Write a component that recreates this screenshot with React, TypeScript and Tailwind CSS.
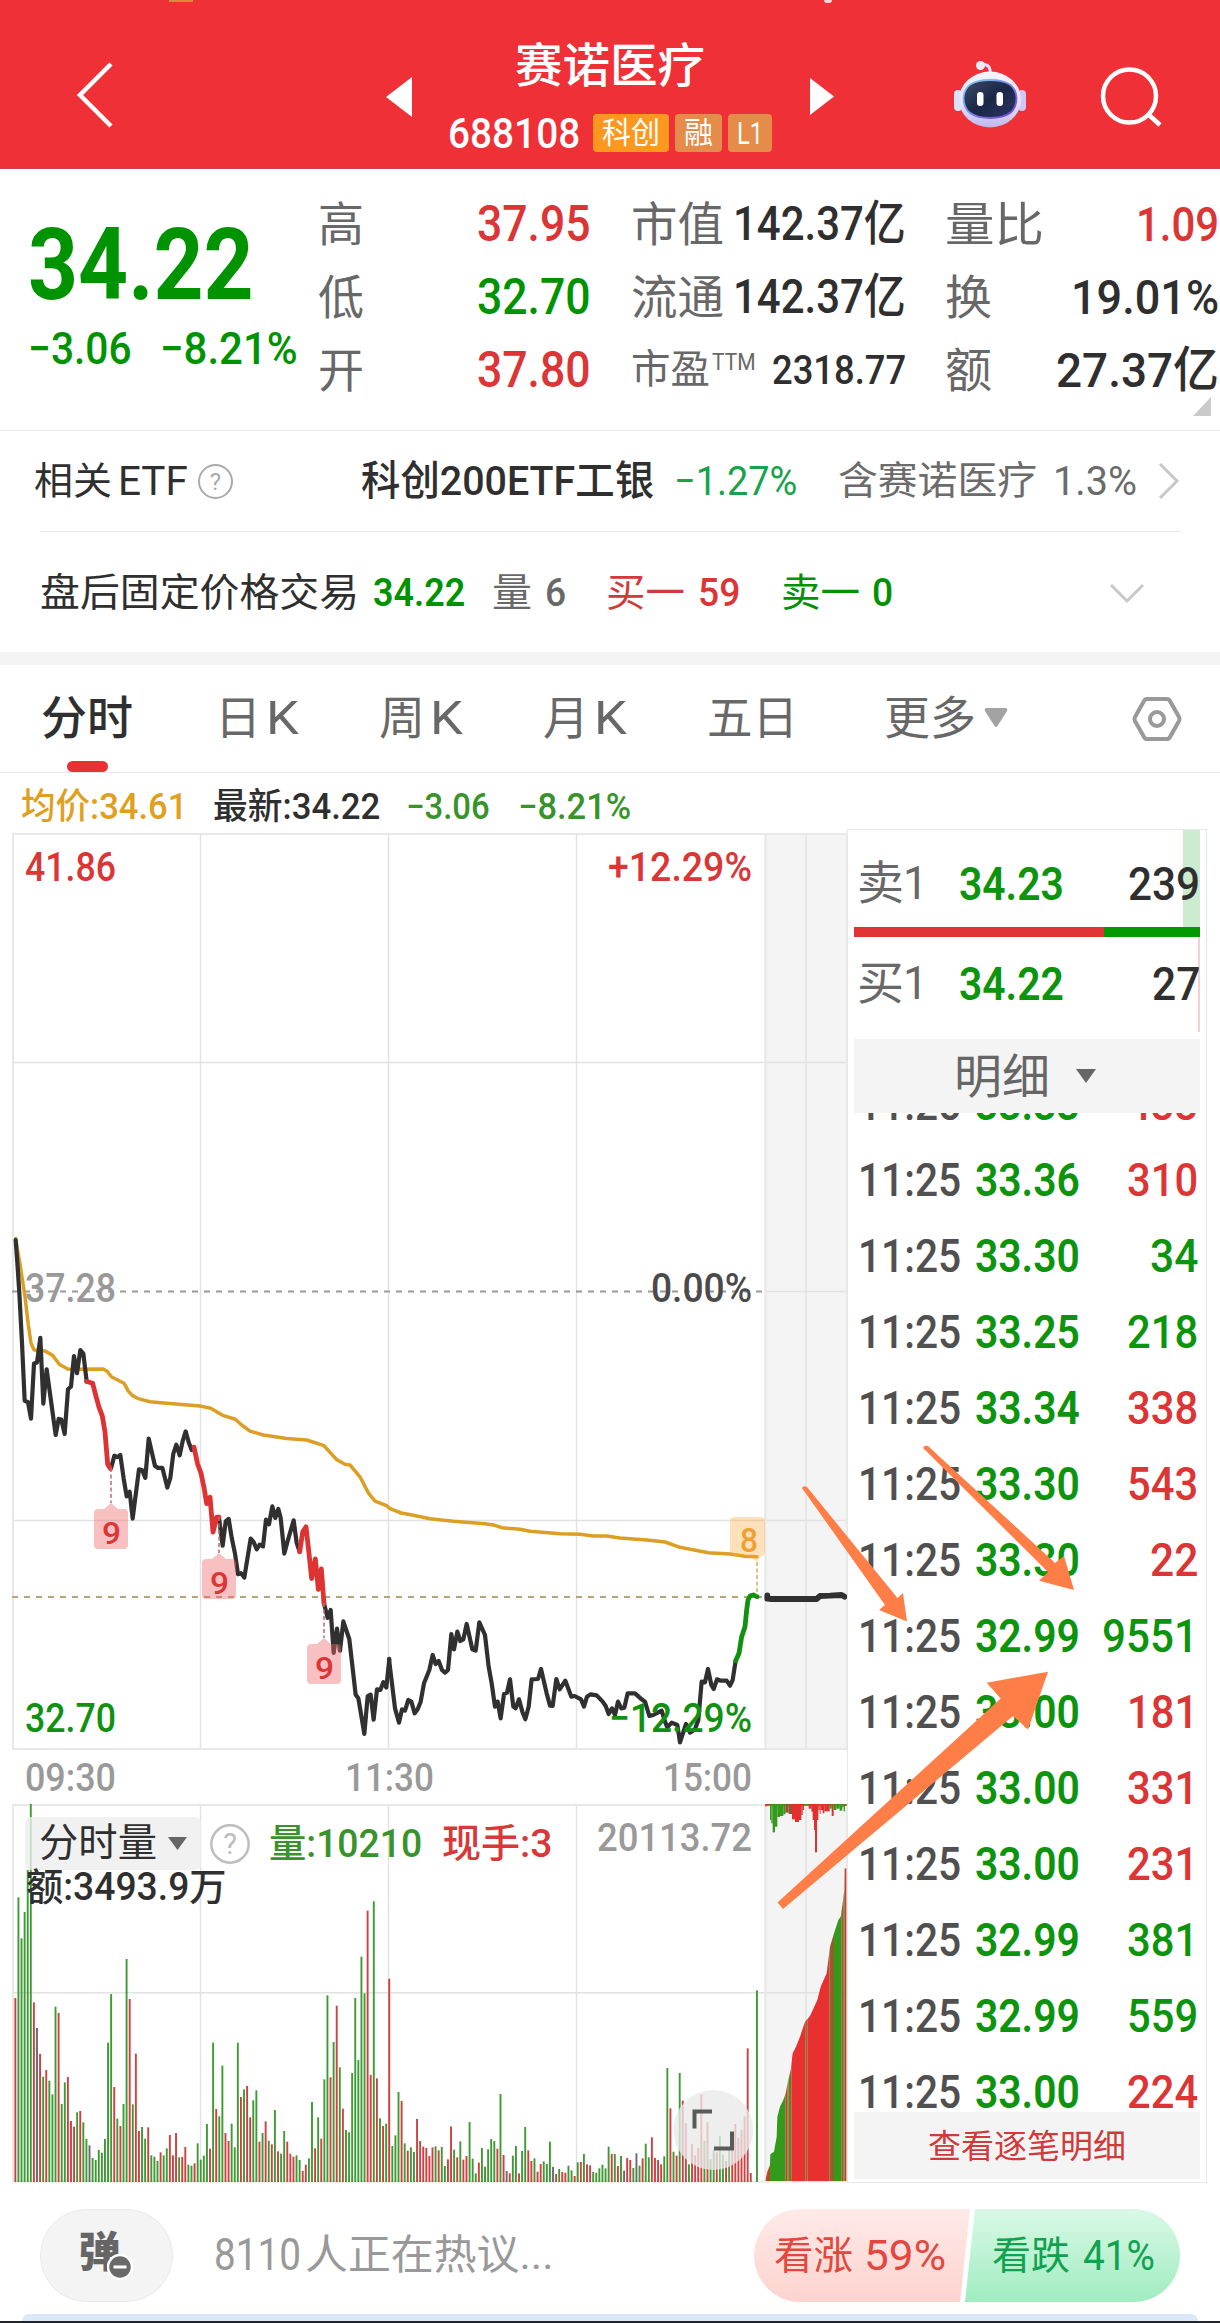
import { ReactNode, useLayoutEffect, useRef } from "react";
import clsx from "clsx";

interface FitProps {
  w: number;
  className?: string;
  children: ReactNode;
}

// Condenses a line of text horizontally until it fills the given width
function Fit({ w, className, children }: FitProps) {
  const ref = useRef<HTMLSpanElement>(null);

  useLayoutEffect(() => {
    const el = ref.current;
    if (!el) return;
    el.style.transform = `scaleX(${w / el.offsetWidth})`;
  }, [w, children]);

  return (
    <span className={clsx("block shrink-0 whitespace-nowrap leading-none", className)} style={{ width: w }}>
      <span ref={ref} className="inline-block origin-left align-top">{children}</span>
    </span>
  );
}

interface ChartTextProps {
  x: number;
  y: number;
  w: number;
  fill: string;
  size?: number;
  children: ReactNode;
}

function ChartText({ x, y, w, fill, size = 40, children }: ChartTextProps) {
  return (
    <text x={x} y={y} textLength={w} lengthAdjust="spacingAndGlyphs" fontSize={size} fontWeight={500} fill={fill}>
      {children}
    </text>
  );
}

function Robot() {
  return (
    <svg width="74" height="70" viewBox="0 0 74 70">
      <defs>
        <linearGradient id="shell" x1="0" y1="0" x2="0" y2="1">
          <stop offset="0" stopColor="#f7f4ff" />
          <stop offset="0.6" stopColor="#e3defa" />
          <stop offset="1" stopColor="#bdb9ee" />
        </linearGradient>
        <linearGradient id="visor" x1="0" y1="0" x2="1" y2="1">
          <stop offset="0" stopColor="#3f4a68" />
          <stop offset="0.5" stopColor="#1b2747" />
          <stop offset="1" stopColor="#2a3560" />
        </linearGradient>
        <linearGradient id="rim" x1="0" y1="0" x2="1" y2="1">
          <stop offset="0" stopColor="#7fd8f2" />
          <stop offset="1" stopColor="#7a35e0" />
        </linearGradient>
      </defs>
      <path d="M27 5 C36 3 38 8 37 16" fill="none" stroke="#e3defa" strokeWidth="3" />
      <circle cx="27.500" cy="5.500" r="4.500" fill="#efe9fb" />
      <rect x="1" y="30" width="8" height="21" rx="4" fill="#d9e4fb" />
      <rect x="65" y="30" width="8" height="21" rx="4" fill="#cfc8f5" />
      <ellipse cx="37" cy="39.500" rx="31" ry="28" fill="url(#shell)" />
      <path d="M37 20 C54 20 63 25 63.500 38 C63.500 52 54 58 37 58 C20 58 10.500 52 10.500 38 C11 25 20 20 37 20Z" fill="url(#visor)" stroke="url(#rim)" strokeWidth="1.800" />
      <rect x="24" y="32" width="6.500" height="14" rx="3.200" fill="#fff" />
      <rect x="43.500" y="32" width="6.500" height="14" rx="3.200" fill="#fff" />
    </svg>
  );
}

function Header() {
  return (
    <header className="relative flex h-[169px] shrink-0 border-b border-[#c8404c] bg-[#f03037] text-white">
      <span className="absolute left-[169px] top-0 h-0.5 w-6 bg-[#d98a3c]" />
      <span className="absolute left-[824px] top-0 h-[3px] w-2 rounded-b-full bg-white/80" />
      <svg className="ml-[74px] mt-[60px] shrink-0" width="42" height="70" viewBox="0 0 42 70" fill="none" stroke="#fff" strokeWidth="4.500">
        <path d="M37 4 L6 35 L37 66" />
      </svg>
      <svg className="ml-[270px] mt-[77px] shrink-0" width="27" height="40" viewBox="0 0 27 40" fill="#fff">
        <path d="M26 0 V40 L0 20Z" />
      </svg>
      <div className="ml-[36px] flex w-[361px] shrink-0 flex-col">
        <Fit w={190} className="ml-[66px] mt-[42px] text-[47px] font-medium">赛诺医疗</Fit>
        <div className="mt-[24px] flex h-[40px] items-center">
          <Fit w={132} className="-ml-px mt-[2px] text-[42px] font-medium">688108</Fit>
          <span className="ml-[13px] flex h-[38px] w-[76px] items-center justify-center rounded bg-[#fd981f]">
            <Fit w={58} className="text-[30px]">科创</Fit>
          </span>
          <span className="ml-[6px] flex h-[38px] w-[47px] items-center justify-center rounded bg-[#e58c4a]">
            <Fit w={29} className="text-[30px]">融</Fit>
          </span>
          <span className="ml-[6px] flex h-[38px] w-[44px] items-center justify-center rounded bg-[#e58c4a]">
            <Fit w={26} className="text-[32px]">L1</Fit>
          </span>
        </div>
      </div>
      <svg className="mt-[78px] shrink-0" width="24" height="37" viewBox="0 0 24 37" fill="#fff">
        <path d="M0 0 V37 L24 18.500Z" />
      </svg>
      <div className="ml-[119px] mt-[60px] shrink-0"><Robot /></div>
      <svg className="ml-[73px] mt-[64px] shrink-0" width="64" height="66" viewBox="0 0 64 66" fill="none" stroke="#fff" strokeWidth="4.500">
        <circle cx="29.500" cy="32" r="26.500" />
        <path d="M48 50 L60 61" />
      </svg>
    </header>
  );
}

const RED = "text-[#dc3535]";
const GREEN = "text-[#009300]";
const INK = "text-[#2f2f2f]";

const stats = [
  {
    a: ["高", 46, "37.95", RED],
    b: ["市值", 93, "142.37亿", 173],
    c: ["量比", 99, "1.09", 83, RED],
  },
  {
    a: ["低", 46, "32.70", GREEN],
    b: ["流通", 93, "142.37亿", 173],
    c: ["换", 47, "19.01%", 148, INK],
  },
  {
    a: ["开", 46, "37.80", RED],
    b: ["市盈", 79, "2318.77", 134],
    c: ["额", 47, "27.37亿", 163, INK],
  },
] as const;

function Quote() {
  return (
    <section className="flex h-[262px] shrink-0 border-b border-[#ececec]">
      <div className={clsx("ml-[28px] w-[290px] shrink-0", GREEN)}>
        <Fit w={226} className="mt-[46px] text-[100px] font-bold">34.22</Fit>
        <div className="mt-[11px] flex">
          <Fit w={104} className="text-[45px] font-medium">−3.06</Fit>
          <Fit w={138} className="ml-[28px] text-[45px] font-medium">−8.21%</Fit>
        </div>
      </div>
      <div className="flex flex-col pt-[18px]">
        {stats.map(({ a, b, c }) => (
          <div key={a[0]} className="flex h-[73px] items-center pt-px">
            <Fit w={a[1]} className="text-[47px] text-[#686868]">{a[0]}</Fit>
            <Fit w={114} className={clsx("ml-[113px] text-[50px] font-medium", a[3])}>{a[2]}</Fit>
            <div className="ml-[40px] flex w-[275px] shrink-0 items-center">
              <Fit w={b[1]} className={clsx("text-[#686868]", b[1] === 79 ? "text-[40px]" : "text-[47px]")}>{b[0]}</Fit>
              {b[1] === 79 && <Fit w={44} className="ml-[2px] -mt-[15px] text-[23px] text-[#686868]">TTM</Fit>}
              <Fit w={b[3]} className={clsx("ml-auto font-medium", INK, b[1] === 79 ? "text-[41px]" : "text-[48px]")}>{b[2]}</Fit>
            </div>
            <div className="ml-[39px] flex w-[274px] shrink-0 items-center">
              <Fit w={c[1]} className="text-[47px] text-[#686868]">{c[0]}</Fit>
              <Fit w={c[3]} className={clsx("ml-auto text-[49px] font-medium", c[4])}>{c[2]}</Fit>
            </div>
          </div>
        ))}
        <svg className="-mt-[9px] ml-[875px]" width="18" height="19" viewBox="0 0 18 19" fill="#cacaca">
          <path d="M18 0 V19 H0Z" />
        </svg>
      </div>
    </section>
  );
}

function EtfRow() {
  return (
    <div className="flex h-[100px] shrink-0 items-center pl-[34px]">
      <Fit w={78} className={clsx("text-[38px]", INK)}>相关</Fit>
      <Fit w={70} className={clsx("ml-[6px] text-[41px]", INK)}>ETF</Fit>
      <svg className="ml-[9px] shrink-0" width="37" height="37" viewBox="0 0 37 37">
        <circle cx="18.500" cy="18.500" r="16.500" fill="none" stroke="#aaa" strokeWidth="2" />
        <text x="18.500" y="27" textAnchor="middle" fontSize="24" fill="#aaa">?</text>
      </svg>
      <Fit w={293} className={clsx("ml-[127px] text-[41px] font-medium", INK)}>科创200ETF工银</Fit>
      <Fit w={123} className="ml-[20px] text-[41px] text-[#16a34a]">−1.27%</Fit>
      <Fit w={199} className="ml-[41px] text-[39px] text-[#6b6b6b]">含赛诺医疗</Fit>
      <Fit w={84} className="ml-[16px] text-[41px] text-[#6b6b6b]">1.3%</Fit>
      <svg className="ml-[20px] shrink-0" width="24" height="38" viewBox="0 0 24 38" fill="none" stroke="#c8c8c8" strokeWidth="3">
        <path d="M3 2 L20 19 L3 36" />
      </svg>
    </div>
  );
}

function AfterHoursRow() {
  return (
    <div className="flex h-[120px] shrink-0 items-center pl-[40px] pt-[2px]">
      <Fit w={319} className={clsx("text-[39px]", INK)}>盘后固定价格交易</Fit>
      <Fit w={92} className={clsx("ml-[14px] text-[39px] font-semibold", GREEN)}>34.22</Fit>
      <Fit w={40} className="ml-[27px] text-[39px] text-[#686868]">量</Fit>
      <Fit w={21} className="ml-[13px] text-[39px] font-medium text-[#686868]">6</Fit>
      <Fit w={79} className="ml-[40px] text-[39px] text-[#d03a3a]">买一</Fit>
      <Fit w={42} className={clsx("ml-[13px] text-[39px] font-medium", RED)}>59</Fit>
      <Fit w={79} className={clsx("ml-[41px] text-[39px]", GREEN)}>卖一</Fit>
      <Fit w={21} className={clsx("ml-[12px] text-[39px] font-medium", GREEN)}>0</Fit>
      <svg className="ml-[215px] shrink-0" width="38" height="22" viewBox="0 0 38 22" fill="none" stroke="#c8c8c8" strokeWidth="3">
        <path d="M3 3 L19 19 L35 3" />
      </svg>
    </div>
  );
}

function Tabs() {
  return (
    <nav className="flex h-[108px] shrink-0 border-b border-[#e6e6e6] pl-[41px] text-[46px] text-[#686868]">
      <div className="relative w-[92px] pt-[30px]">
        <Fit w={92} className={clsx("font-medium", INK)}>分时</Fit>
        <span className="absolute bottom-0 left-[26px] h-[11px] w-[41px] rounded-full bg-[#e63232]" />
      </div>
      <Fit w={46} className="ml-[82px] pt-[30px]">日</Fit>
      <Fit w={33} className="ml-[5px] pt-[30px]">K</Fit>
      <Fit w={46} className="ml-[80px] pt-[30px]">周</Fit>
      <Fit w={33} className="ml-[5px] pt-[30px]">K</Fit>
      <Fit w={46} className="ml-[80px] pt-[30px]">月</Fit>
      <Fit w={33} className="ml-[5px] pt-[30px]">K</Fit>
      <Fit w={91} className="ml-[80px] pt-[30px]">五日</Fit>
      <Fit w={92} className="ml-[86px] pt-[30px]">更多</Fit>
      <svg className="ml-[8px] mt-[43px]" width="24" height="20" viewBox="0 0 24 20" fill="#a3a3a3">
        <path d="M2 0 H22 Q24 1 23 3 L13.500 18 Q12 20 10.500 18 L1 3 Q0 1 2 0Z" />
      </svg>
      <svg className="ml-[123px] mt-[30px]" width="52" height="48" viewBox="0 0 52 48" fill="none" stroke="#999" strokeWidth="4">
        <path d="M16 4 H36 Q38 4 39 6 L48 22 Q49 24 48 26 L39 42 Q38 44 36 44 H16 Q14 44 13 42 L4 26 Q3 24 4 22 L13 6 Q14 4 16 4Z" />
        <circle cx="26" cy="24" r="7" />
      </svg>
    </nav>
  );
}

function Legend() {
  return (
    <div className="flex h-[56px] shrink-0 items-center pl-[21px] pt-[12px] text-[36px] font-medium">
      <Fit w={166} className="text-[#e0a01e]">均价:34.61</Fit>
      <Fit w={167} className={clsx("ml-[26px]", INK)}>最新:34.22</Fit>
      <Fit w={84} className="ml-[26px] text-[#37932a]">−3.06</Fit>
      <Fit w={113} className="ml-[28px] text-[#37932a]">−8.21%</Fit>
    </div>
  );
}

// Morning session, plotted on a 1200 x 1568 grid
const amBlack = [
  "47,112 52,175 58,260 66,400 74,562 84,566 93,612 102,458 111,455 121,386 130,570 140,474 167,658 176,613 184,615 194,655 204,530 213,522 222,437 231,485 241,420 250,430 260,508",
  "333,752 343,716 352,720 361,714 371,780 380,830 389,817 398,892 417,754 427,757 436,778 446,668 465,745 474,750 487,750 502,805 511,778 520,710 529,685 539,715 548,675 557,648 566,678 575,700 582,692",
  "657,890 668,968 677,900 686,893 695,945 705,990 714,1048 723,1045 733,1057 752,948 761,958 770,978 779,965 789,970 798,895 807,908 817,858 826,890 835,865 842,890 853,990 863,955 881,897 890,960 899,985",
  "972,1130 983,1170 992,1148 1001,1268 1011,1200 1020,1262 1030,1180 1048,1230 1067,1385 1075,1395 1093,1495 1103,1390 1112,1385 1121,1455 1131,1370 1141,1372 1150,1350 1159,1365 1168,1285",
];
const amRed = [
  "260,508 278,513 288,550 297,580 307,605 315,650 323,740 331,752",
  "582,692 593,740 603,765 612,805 620,850 630,832 639,930 650,888 657,888",
  "899,985 908,930 918,915 927,990 935,1060 946,1005 955,1090 964,1033 972,1130",
];
const amAverage =
  "47,108 60,180 75,270 85,350 93,400 98,412 103,420 135,423 158,435 178,460 203,473 225,474 310,473 322,480 334,495 372,513 385,535 398,548 415,556 450,565 500,569 600,577 632,583 668,603 706,614 725,630 750,647 790,658 860,668 920,672 972,688 1010,727 1035,740 1050,742 1080,775 1105,820 1125,843 1160,856 1170,864 1200,875";

// Afternoon session, plotted on a 1440 x 1080 grid
const pmBlack =
  "27,658 45,805 57,848 66,808 75,812 85,780 94,785 104,820 113,808 122,785 132,730 148,690 158,645 167,672 176,663 186,690 195,698 204,690 214,582 222,628 232,575 241,603 250,598 260,552 277,628 287,632 298,547 315,585 326,680 335,730 345,800 353,785 362,835 372,762 381,758 390,718 400,800 407,805 417,778 427,815 436,838 446,800 455,718 474,717 483,687 500,760 510,797 518,798 529,717 539,748 556,722 574,770 584,768 603,778 612,800 621,770 632,763 650,766 668,785 677,798 686,822 696,805 705,825 714,785 724,805 733,803 743,760 765,760 785,778 795,785 808,828 820,825 845,812 855,845 862,862 875,848 892,855 900,907 918,852 930,878 945,868 955,840 965,725 975,727 984,687 994,735 1001,747 1011,718 1022,722 1040,722 1050,737 1058,720 1067,662";
const pmGreen = "1067,662 1077,640 1085,590 1095,560 1100,510 1104,480 1110,468 1120,465 1131,470";
const pmAverage =
  "60,218 100,226 150,236 220,244 315,251 345,256 365,263 420,268 450,274 540,281 600,283 640,288 680,288 720,294 800,300 855,306 900,322 985,338 1050,342 1095,349 1131,350";

function Line({ points, stroke, width = 4.2 }: { points: string; stroke: string; width?: number }) {
  return (
    <polyline
      points={points}
      fill="none"
      stroke={stroke}
      strokeWidth={width}
      strokeLinejoin="round"
      strokeLinecap="round"
      vectorEffect="non-scaling-stroke"
    />
  );
}

const nines = [
  { x: 111, from: 1468, top: 1503 },
  { x: 219, from: 1517, top: 1553 },
  { x: 324, from: 1603, top: 1638 },
];

function PriceChart() {
  return (
    <svg className="block" width="848" height="926" viewBox="0 829 848 926">
      <rect x="764" y="833" width="84" height="917" fill="#f4f4f4" />
      <g stroke="#e2e2e2" strokeWidth="1.500">
        <path d="M12 1062.500 H847 M12 1520.500 H847 M765 1291.500 H847" />
        <path d="M200.500 833 V1749 M388.500 833 V1749 M576.500 833 V1749 M806 833 V1749" />
      </g>
      <path d="M13 834 H847 V1749 H13Z M765.500 834 V1749" fill="none" stroke="#e8e8e8" strokeWidth="2" />
      <path d="M12 1291.500 H763" stroke="#999" strokeWidth="1.800" strokeDasharray="6 6" />
      <path d="M12 1597 H763" stroke="#b8a478" strokeWidth="1.800" strokeDasharray="6 6" />

      <ChartText x={25} y={1302} w={91} fill="#999">37.28</ChartText>
      <ChartText x={651} y={1302} w={101} fill="#4a4a4a">0.00%</ChartText>

      <g transform="translate(0 1200) scale(0.33333 0.35714)">
        <Line points={amAverage} stroke="#dc9f24" width={3.5} />
        {amBlack.map((p) => <Line key={p} points={p} stroke="#303030" />)}
        {amRed.map((p) => <Line key={p} points={p} stroke="#dd3333" width={4.8} />)}
      </g>
      <g transform="translate(380 1440) scale(0.33333)">
        <Line points={pmAverage} stroke="#dc9f24" width={3.5} />
        <Line points={pmBlack} stroke="#303030" />
        <Line points={pmGreen} stroke="#109210" width={4.8} />
        <Line points="1162,466 1162,476 1175,477 1310,477 1320,468 1350,467 1385,465 1394,470" stroke="#303030" width={5.8} />
      </g>

      {nines.map(({ x, from, top }) => (
        <g key={x}>
          <path d={`M${x} ${from} V${top}`} stroke="#c06a70" strokeWidth="1.500" strokeDasharray="4 2.500" />
          <path
            d={`M${x} ${top} L${x + 7} ${top + 6} H${x + 13} q4 0 4 4 V${top + 42} q0 4 -4 4 H${x - 13} q-4 0 -4 -4 V${top + 10} q0 -4 4 -4 H${x - 7}Z`}
            fill="#ee6a6a"
            fillOpacity="0.420"
          />
          <ChartText x={x - 9} y={top + 40.5} w={19} size={32} fill="#dc3535">9</ChartText>
        </g>
      ))}
      <path d="M757 1562 V1595" stroke="#e0a860" strokeWidth="1.500" strokeDasharray="4 2.500" />
      <path d="M734 1517 H761 q4 0 4 4 V1552 q0 4 -4 4 L757 1562 L750 1556 H734 q-4 0 -4 -4 V1521 q0 -4 4 -4Z" fill="#fda83c" fillOpacity="0.350" />
      <ChartText x={740} y={1552} w={18} size={33} fill="#efa030">8</ChartText>

      <ChartText x={25} y={881} w={91} fill="#dc3535">41.86</ChartText>
      <ChartText x={608} y={881} w={144} fill="#dc3535">+12.29%</ChartText>
      <ChartText x={25} y={1732} w={91} fill="#109210">32.70</ChartText>
      <ChartText x={609} y={1732} w={143} fill="#109210">−12.29%</ChartText>
    </svg>
  );
}

function TimeAxis() {
  return (
    <div className="flex h-[49px] items-start pl-[25px] pt-[4px] text-[39px] font-medium text-[#999]">
      <Fit w={91}>09:30</Fit>
      <Fit w={89} className="ml-[229px]">11:30</Fit>
      <Fit w={89} className="ml-[229px]">15:00</Fit>
    </div>
  );
}

// One entry per minute: colour key and the y of the bar's top on a 1266-high grid
const volume = (
  "r714 g412 g535 g456 g330 g132 r727 k804 r882 g950 r930 g962 g1003 g740 r759 g1032 g967 r951 r1083 r1100 g1057 r1053 g1087 g1137 k1156 g1194 g1200 g1170 g1178 g1137 " +
  "g848 g702 r981 g1076 r1098 g1032 g597 r717 g1033 r881 r1113 g1101 g1136 r1102 g1186 g1190 g1203 r1177 g1186 g1165 r1125 r1186 r1119 g1192 r1191 r1161 g1214 g1217 r1210 g1150 " +
  "g1199 g1187 g1092 r1166 g848 r1047 g1069 g917 r1119 r1143 g1091 g1162 g848 r1011 g988 r978 r1072 g1021 g991 r1145 g1119 r1084 g1142 r1153 g1050 r1174 g1181 g1113 r1145 r1181 " +
  "r1190 g1186 g1200 r1233 r1214 g1195 g1026 r1165 g1072 r1136 g958 g706 r952 g846 r737 g922 r1046 g1110 g1117 g939 g714 g900 g590 g700 r452 r945 g424 r955 g1075 r1098 " +
  "g1091 r656 g1158 g1126 g996 r1023 g1150 r1172 g1162 g1176 r1077 r1143 r1160 r1164 r1188 r1162 g1159 r1171 g1161 g1218 r1198 r1099 g1169 r1192 g1144 r1199 r1188 g1086 g1196 g1240 " +
  "r1208 g1164 g1220 g1168 g1137 g1143 r1166 g1002 r1185 k1233 r1240 g1187 g1158 r1240 g1173 g1101 r1171 r1203 g1195 r1235 r1212 g1204 g1212 g1145 k1221 r1242 g1227 r1236 r1238 g1217 " +
  "g1231 r1248 g1207 r1206 g1182 r1213 r1216 g1236 g1238 g1225 g1214 g1225 g1160 r1182 g1182 r1218 g1188 k1232 r1194 r1200 g1224 k1180 g1217 r1195 g1151 g1192 r1132 r1194 r1200 r1213 " +
  "g1189 g924 r1045 g1175 r1187 g939 r1022 r1090 g1213 r1152 r1186 r1164 r1003 g1142 r1086 g1197 g1170 r1177 g1127 g1184 r1203 g1170 r1170 r1092 r1134 r1110 r1069 r865 r1239 r1266 g691"
).split(" ");

const barColors: Record<string, string> = { r: "#cf4040", g: "#3f9a35", k: "#6a6a6a" };

const auctionOutline: [number, number][] = [
  [1006, 1262], [1012, 1235], [1020, 1215], [1021, 1183], [1032, 1175], [1040, 1130], [1042, 1070], [1050, 1040],
  [1060, 1020], [1067, 1000], [1075, 960], [1082, 930], [1088, 880], [1098, 860], [1110, 830], [1125, 785],
  [1140, 768], [1162, 720], [1172, 680], [1190, 640], [1200, 560], [1212, 520], [1225, 480], [1232, 470],
  [1238, 430], [1243, 390], [1244, 325], [1250, 325],
];

// [start, end, colour] stripes of the call auction volume
const auctionBands: [number, number, string][] = [
  [1006, 1020, "#b84a24"], [1020, 1067, "#339a1c"], [1067, 1072, "#e83030"], [1072, 1076, "#8d6a20"], [1076, 1080, "#339a1c"],
  [1080, 1084, "#8d6a20"], [1084, 1126, "#e83030"], [1126, 1132, "#8d6a20"], [1132, 1198, "#e83030"],
  [1198, 1212, "#94602a"], [1212, 1234, "#339a1c"], [1234, 1241, "#94602a"], [1241, 1244, "#339a1c"], [1244, 1250, "#d83434"],
];

const unmatched: [number, number, number, string][] = [
  [1006, 6, 139, "r"], [1020, 4, 180, "g"], [1024, 4, 190, "g"], [1028, 7, 217, "g"], [1035, 7, 200, "g"], [1042, 8, 171, "g"],
  [1050, 10, 168, "g"], [1060, 6, 163, "g"], [1066, 10, 158, "b"], [1076, 10, 162, "b"], [1086, 9, 178, "r"],
  [1095, 12, 186, "r"], [1107, 7, 180, "r"], [1114, 4, 165, "r"], [1118, 4, 150, "r"], [1122, 14, 137, "g"],
  [1136, 8, 146, "r"], [1144, 7, 155, "r"], [1148, 4, 180, "r"], [1152, 4, 210, "r"], [1155, 6, 277, "r"],
  [1161, 4, 180, "r"], [1165, 4, 150, "r"], [1169, 3, 161, "r"], [1172, 9, 150, "r"], [1178, 5, 160, "r"],
  [1183, 16, 154, "r"], [1199, 6, 146, "g"], [1205, 6, 168, "r"], [1211, 8, 150, "g"], [1219, 10, 146, "g"],
  [1229, 8, 152, "g"], [1237, 4, 142, "g"], [1241, 4, 154, "g"], [1245, 4, 138, "r"],
];
const unmatchedColors: Record<string, string> = { r: "#e03030", g: "#339a1c", b: "#9a5030" };

function VolumeChart() {
  const outline = auctionOutline.map(([x, y]) => `${x},${y}`).join(" ");

  return (
    <div className="relative h-[380px]">
      <svg className="block" width="848" height="380" viewBox="0 1804 848 380">
        <rect x="764" y="1804" width="84" height="378" fill="#f4f4f4" />
        <g stroke="#e2e2e2" strokeWidth="1.500">
          <path d="M200.500 1805 V2181 M388.500 1805 V2181 M576.500 1805 V2181 M806 1805 V2181 M12 1992.700 H847" />
        </g>
        <path d="M13 1805 H847 V2181.500 H13Z M765.500 1805 V2181" fill="none" stroke="#e8e8e8" strokeWidth="2" />
        {volume.map((v, i) => {
          const h = (1266 - Number(v.slice(1))) / 3;
          return <rect key={i} x={14.4 + i * 3.09} y={2182 - h} width="1.900" height={h} fill={barColors[v[0]]} />;
        })}
        <g transform="translate(430 1760) scale(0.33333)">
          <clipPath id="auction">
            <polygon points={`${outline} 1250,1264 1006,1264`} />
          </clipPath>
          <g clipPath="url(#auction)">
            {auctionBands.map(([from, to, fill]) => (
              <rect key={from} x={from} y="300" width={to - from} height="964" fill={fill} />
            ))}
          </g>
          <rect x="1006" y="132" width="244" height="5" fill="#b04030" />
          {unmatched.map(([x, w, y, c]) => (
            <rect key={x} x={x} y="132" width={w} height={y - 132} fill={unmatchedColors[c]} />
          ))}
        </g>
        <circle cx="713.300" cy="2130" r="40" fill="#e9e9e9" fillOpacity="0.780" />
        <path d="M694.500 2128.500 V2111.500 H712 M732 2131.500 V2148.500 H714" fill="none" stroke="#5a5a5a" strokeWidth="4" />
      </svg>

      <div className="absolute left-[25px] top-[13px] flex h-[53px] items-center">
        <div className="flex h-[53px] w-[176px] shrink-0 items-center rounded-md bg-[#ededed]/80 pl-[14px]">
          <Fit w={118} className={clsx("text-[39px]", INK)}>分时量</Fit>
          <svg className="ml-[11px]" width="19" height="13" viewBox="0 0 19 13" fill="#666">
            <path d="M0 0 H19 L9.500 13Z" />
          </svg>
        </div>
        <svg className="ml-[8px] shrink-0" width="42" height="42" viewBox="0 0 42 42">
          <circle cx="21" cy="21" r="18.700" fill="none" stroke="#bdbdbd" strokeWidth="2.500" />
          <text x="21" y="31" textAnchor="middle" fontSize="29" fill="#bdbdbd">?</text>
        </svg>
        <Fit w={153} className="ml-[18px] mt-px text-[39px] font-medium text-[#37932a]">量:10210</Fit>
        <Fit w={110} className="ml-[20px] mt-px text-[39px] font-medium text-[#d83838]">现手:3</Fit>
        <Fit w={155} className="-mt-[11px] ml-[45px] text-[39px] font-medium text-[#999]">20113.72</Fit>
      </div>
      <Fit w={201} className={clsx("absolute left-[26px] top-[64px] text-[38px] font-medium", INK)}>额:3493.9万</Fit>
    </div>
  );
}

const G = "text-[#0c940c]";
const trades: [string, string, string, number][] = [
  ["33.33", "433", RED, 71],
  ["33.36", "310", RED, 71],
  ["33.30", "34", G, 48],
  ["33.25", "218", G, 71],
  ["33.34", "338", RED, 71],
  ["33.30", "543", RED, 71],
  ["33.30", "22", RED, 48],
  ["32.99", "9551", G, 96],
  ["33.00", "181", RED, 71],
  ["33.00", "331", RED, 71],
  ["33.00", "231", RED, 71],
  ["32.99", "381", G, 71],
  ["32.99", "559", G, 71],
  ["33.00", "224", RED, 71],
];

function OrderBook() {
  return (
    <aside className="h-[1354px] w-[360px] shrink-0 border border-[#e8e8e8] pl-[6px]">
      <div className="relative flex h-[97px] w-[346px] items-center pt-[9px]">
        <span className="absolute right-0 top-0 h-full w-[17px] bg-[#cdebcf]" />
        <Fit w={47} className="ml-[3px] text-[46px] text-[#686868]">卖</Fit>
        <Fit w={25} className="-ml-px text-[46px] text-[#686868]">1</Fit>
        <Fit w={105} className={clsx("ml-[31px] text-[47px] font-semibold", G)}>34.23</Fit>
        <Fit w={72} className={clsx("relative ml-auto text-[47px] font-medium", INK)}>239</Fit>
      </div>
      <div className="flex h-[10px] w-[346px]">
        <div className="w-[250px] bg-[#e23434]" />
        <div className="grow bg-[#009a00]" />
      </div>
      <div className="relative flex h-[95px] w-[346px] items-center pb-[3px]">
        <span className="absolute right-0 top-0 h-full w-[2px] bg-[#f6d0d0]" />
        <Fit w={47} className="ml-[3px] text-[46px] text-[#686868]">买</Fit>
        <Fit w={25} className="-ml-px text-[46px] text-[#686868]">1</Fit>
        <Fit w={105} className={clsx("ml-[31px] text-[47px] font-semibold", G)}>34.22</Fit>
        <Fit w={48} className={clsx("relative ml-auto text-[47px] font-medium", INK)}>27</Fit>
      </div>
      <div className="mt-[7px] flex h-[74px] w-[346px] items-center bg-[#f4f4f4]">
        <Fit w={96} className="ml-[100px] text-[47px] text-[#666]">明细</Fit>
        <svg className="ml-[26px]" width="20" height="14" viewBox="0 0 20 14" fill="#666">
          <path d="M0 0 H20 L10 14Z" />
        </svg>
      </div>
      <div className="h-[999px] w-[346px] overflow-hidden">
        <div className="-mt-[48px]">
          {trades.map(([price, vol, color, w], i) => (
            <div key={i} className="flex h-[76px] items-center pl-[4px] pr-[2px] text-[47px] font-medium">
              <Fit w={103} className="text-[#505050]">11:25</Fit>
              <Fit w={105} className={clsx("ml-[14px] font-semibold", G)}>{price}</Fit>
              <Fit w={w} className={clsx("ml-auto", color)}>{vol}</Fit>
            </div>
          ))}
        </div>
      </div>
      <div className="flex h-[67px] w-[346px] items-center justify-center bg-[#f4f4f4]">
        <Fit w={198} className="mt-px text-[33px] text-[#d03a3a]">查看逐笔明细</Fit>
      </div>
    </aside>
  );
}

function Arrows() {
  return (
    <svg className="pointer-events-none absolute left-[770px] top-[1430px]" width="320" height="490" viewBox="770 1430 320 490" fill="#ff7e47">
      <path d="M802 1488 Q803 1485 807 1487 L897.500 1598 L903 1593 L907 1621.500 L879 1610 L885 1605Z" />
      <path d="M923 1448 Q924 1445 928 1446 L1055 1563 L1064 1556 L1074 1590 L1039 1580.700 L1048 1572Z" />
      <path d="M777.500 1902.600 L1000.700 1698.600 L986.700 1682.700 L1048 1671.700 L1028 1729.500 L1013 1716 L783 1909Z" />
    </svg>
  );
}

function BottomBar() {
  return (
    <footer className="flex h-[139px] shrink-0 flex-col">
      <div className="mt-[24px] flex h-[94px] items-center pl-[40px]">
        <div className="relative flex h-[93px] w-[133px] shrink-0 items-center justify-center rounded-full border border-[#eaeaea] bg-[#f4f4f4]">
          <Fit w={42} className="-ml-[14px] -mt-[4px] text-[42px] font-black text-[#666]">弹</Fit>
          <svg className="absolute left-[66px] top-[43px]" width="26" height="28" viewBox="0 0 26 28">
            <circle cx="13" cy="14" r="12" fill="#6a6a6a" stroke="#fff" strokeWidth="2.500" />
            <path d="M6.500 14 H19.500" stroke="#fff" strokeWidth="3" />
          </svg>
        </div>
        <Fit w={87} className="ml-[41px] text-[44px] text-[#999]">8110</Fit>
        <Fit w={248} className="ml-[4px] text-[41px] text-[#999]">人正在热议...</Fit>
        <div className="relative ml-[201px] h-[93px] w-[426px]">
          <svg className="absolute left-0 top-0" width="426" height="93" viewBox="0 0 426 93">
            <defs>
              <linearGradient id="up" x1="0" y1="0" x2="0" y2="1">
                <stop offset="0" stopColor="#ffeae8" />
                <stop offset="1" stopColor="#fdd3ce" />
              </linearGradient>
              <linearGradient id="down" x1="0" y1="0" x2="0" y2="1">
                <stop offset="0" stopColor="#d9f9e6" />
                <stop offset="1" stopColor="#a0ecc0" />
              </linearGradient>
            </defs>
            <path d="M46.500 0 H216 L206 93 H46.500 A46.500 46.500 0 0 1 46.500 0Z" fill="url(#up)" />
            <path d="M221 0 H379.500 A46.500 46.500 0 0 1 379.500 93 H211Z" fill="url(#down)" />
          </svg>
          <div className="relative flex h-full items-center pl-[20px] pt-[2px] text-[39px]">
            <Fit w={79} className="text-[#e2483f]">看涨</Fit>
            <Fit w={82} className="ml-[11px] text-[42px] text-[#e2483f]">59%</Fit>
            <Fit w={78} className="ml-[46px] text-[#12a150]">看跌</Fit>
            <Fit w={72} className="ml-[13px] text-[42px] text-[#12a150]">41%</Fit>
          </div>
        </div>
      </div>
      <div className="mt-[12px] h-[7px] px-[22px]">
        <div className="h-full rounded-t-xl bg-[#dce8fa]" />
      </div>
      <div className="h-[2px] bg-[#20242b]" />
    </footer>
  );
}

export default function App() {
  return (
    <div className="relative flex h-[2323px] w-[1220px] flex-col overflow-hidden bg-white font-[Roboto,'Noto_Sans_CJK_SC',sans-serif]">
      <Header />
      <Quote />
      <EtfRow />
      <div className="ml-[40px] h-px w-[1140px] shrink-0 bg-[#e8e8e8]" />
      <AfterHoursRow />
      <div className="h-[13px] shrink-0 bg-[#f4f4f4]" />
      <Tabs />
      <Legend />
      <main className="flex h-[1355px] shrink-0">
        <div className="w-[847px] shrink-0">
          <PriceChart />
          <TimeAxis />
          <VolumeChart />
        </div>
        <OrderBook />
      </main>
      <BottomBar />
      <Arrows />
    </div>
  );
}
